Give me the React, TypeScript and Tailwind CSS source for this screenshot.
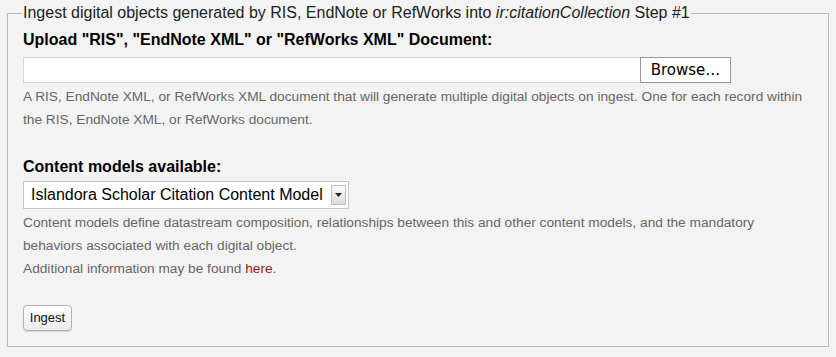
import React from 'react'

const sans = { fontFamily: '"Liberation Sans", Arial, Helvetica, sans-serif' }

function Help({ children }: { children: React.ReactNode }) {
  return <div className="text-[13.7px] leading-[23px] text-[#666]">{children}</div>
}

export default function App() {
  return (
    <div className="min-h-screen bg-[#f3f3f3] pt-[4px] pl-[7px]" style={sans}>
      <fieldset className="w-[822px] h-[343px] border border-[#b8b8b8] pl-[15px] pr-[15px] pb-[13px]">
        <legend className="ml-[-1px] px-[1px] text-[16px] leading-[18px] text-[#222]">
          Ingest digital objects generated by RIS, EndNote or RefWorks into <i>ir:citationCollection</i> Step #1
        </legend>

        <div className="mt-[9px] text-[16px] leading-[18px] font-bold text-black">
          Upload "RIS", "EndNote XML" or "RefWorks XML" Document:
        </div>
        <div className="mt-[8px] flex h-[26px]">
          <div className="w-[617px] h-[26px] bg-white border border-[#d6d6d6] border-r-0" />
          <button
            className="w-[91px] h-[26px] bg-white border border-[#9a9a9a] text-[15px] text-black leading-none"
            style={{ fontFamily: '"DejaVu Sans", Verdana, sans-serif' }}
          >
            Browse…
          </button>
        </div>
        <div className="mt-[2px]">
          <Help>
            A RIS, EndNote XML, or RefWorks XML document that will generate multiple digital objects on ingest. One for
            each record within the RIS, EndNote XML, or RefWorks document.
          </Help>
        </div>

        <div className="mt-[27px] text-[16px] leading-[18px] font-bold text-black">Content models available:</div>
        <div className="mt-[5px] w-[326px] h-[28px] bg-white border border-[#c6c6c6] flex items-center pl-[7px] pr-[2px]">
          <span className="flex-1 text-[16px] text-black leading-none whitespace-nowrap">
            Islandora Scholar Citation Content Model
          </span>
          <span className="w-[15px] h-[20px] border border-[#bdbdbd] bg-gradient-to-b from-[#fbfbfb] to-[#dcdcdc] flex items-center justify-center">
            <svg width="7" height="4" viewBox="0 0 7 4">
              <path d="M0 0h7L3.5 4z" fill="#222" />
            </svg>
          </span>
        </div>
        <div className="mt-[2px]">
          <Help>
            Content models define datastream composition, relationships between this and other content models, and the
            mandatory behaviors associated with each digital object.
            <br />
            Additional information may be found <a className="text-[#8b1a0e]">here</a>.
          </Help>
        </div>

        <button className="mt-[25px] h-[26px] w-[49px] rounded-[4px] border border-[#b0b0b0] bg-gradient-to-b from-white to-[#ececec] text-[13px] text-[#111] shadow-[0_1px_1px_rgba(0,0,0,0.12)]">
          Ingest
        </button>
      </fieldset>
    </div>
  )
}
